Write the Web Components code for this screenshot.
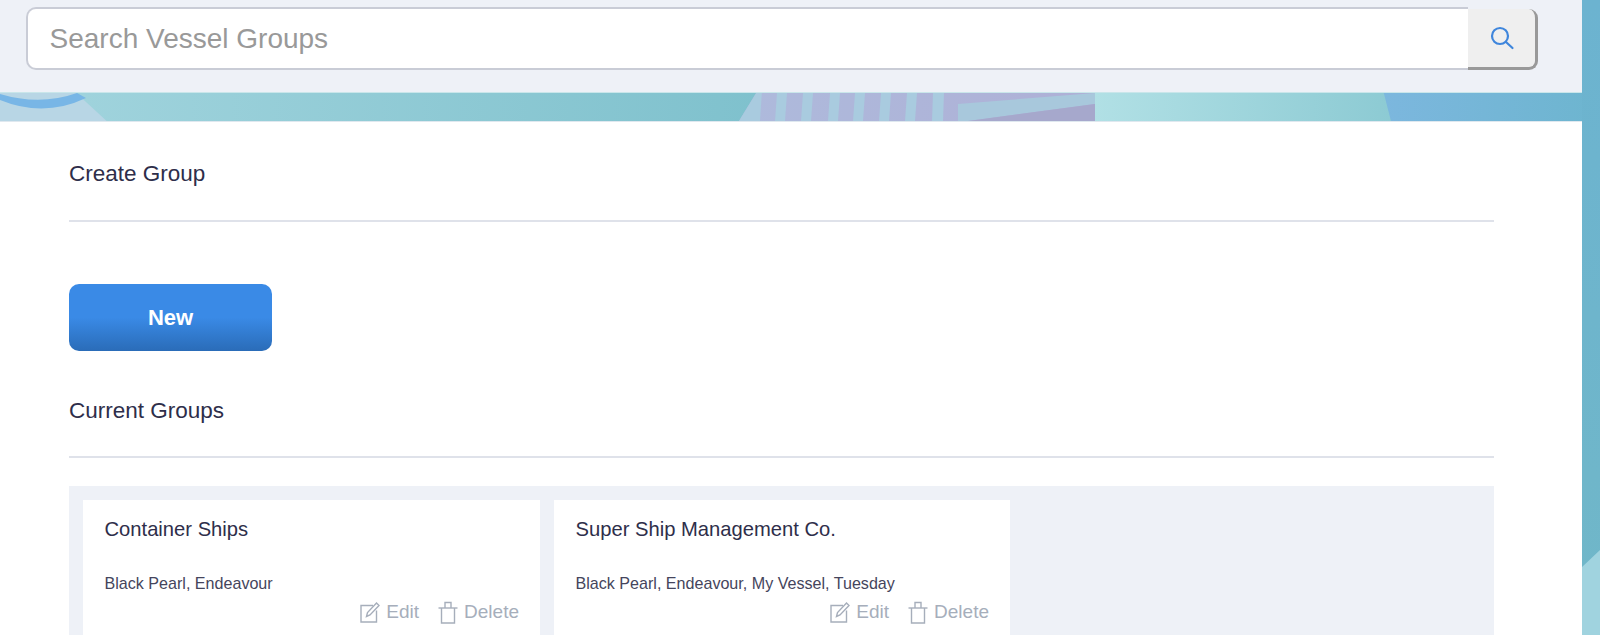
<!DOCTYPE html>
<html>
<head>
<meta charset="utf-8">
<style>
  html, body { margin: 0; padding: 0; }
  body { font-family: "Liberation Sans", Arial, sans-serif; color: #2b2b45; }
</style>
</head>
<body>
<vessel-page>
  <search-box slot="search">Search Vessel Groups</search-box>
  <section-title>Create Group</section-title>
  <new-button>New</new-button>
  <section-title class="current">Current Groups</section-title>
  <group-list>
    <group-card name="Container Ships" vessels="Black Pearl, Endeavour"></group-card>
    <group-card name="Super Ship Management Co." vessels="Black Pearl, Endeavour, My Vessel, Tuesday"></group-card>
  </group-list>
</vessel-page>

<script>
class VesselPage extends HTMLElement {
  constructor() {
    super();
    const shadow = this.attachShadow({ mode: 'open' });
    shadow.innerHTML = `
    <style>
      :host {
        display: block;
        position: relative;
        width: 1600px;
        height: 635px;
        overflow: hidden;
      }
      .backdrop {
        position: absolute;
        left: 0;
        top: 0;
        width: 1600px;
        height: 635px;
      }
      .column {
        position: relative;
        width: 1582px;
        display: flex;
        flex-direction: column;
      }
      .top {
        background: #eef1f7;
        height: 93px;
        box-sizing: border-box;
        padding: 7px 44px 0 26px;
        border-bottom: 1px solid #c9e6ea;
      }
      .main {
        margin-top: 28px;
        background: #fff;
        border-top: 1px solid #dfe8ef;
        height: 514px;
        box-sizing: border-box;
        padding: 0 88px 0 69px;
        display: flex;
        flex-direction: column;
        align-items: stretch;
      }
      ::slotted(*) { flex-shrink: 0; }
    </style>
    <svg class="backdrop" viewBox="0 0 1600 635" aria-hidden="true">
      <defs>
        <linearGradient id="teal" x1="0" x2="1" y1="0" y2="0">
          <stop offset="0" stop-color="#a3d5de"/>
          <stop offset="1" stop-color="#7fc1cd"/>
        </linearGradient>
        <linearGradient id="pale" x1="0" x2="1" y1="0" y2="0">
          <stop offset="0" stop-color="#b1e0e5"/>
          <stop offset="1" stop-color="#8ccad3"/>
        </linearGradient>
        <linearGradient id="blue" x1="0" x2="1" y1="0" y2="0">
          <stop offset="0" stop-color="#7cb7de"/>
          <stop offset="1" stop-color="#6db5cf"/>
        </linearGradient>
        <linearGradient id="strip" x1="0" x2="0" y1="0" y2="1">
          <stop offset="0" stop-color="#6cb3d0"/>
          <stop offset="1" stop-color="#70b7c8"/>
        </linearGradient>
        <linearGradient id="lilac" x1="0" x2="1" y1="0" y2="0">
          <stop offset="0" stop-color="#aebadc"/>
          <stop offset="1" stop-color="#aeb0d6"/>
        </linearGradient>
      </defs>
      <rect x="0" y="90" width="760" height="35" fill="url(#teal)"/>
      <path d="M0 90H73L111 125H0Z" fill="#b8d6e5"/>
      <path d="M0 94Q40 106 77 93L86 98Q44 118 0 100Z" fill="#78b6e6"/>
      <path d="M739 121L758 90H1095V121Z" fill="url(#lilac)"/>
      <path d="M739 121L758 90H762L760 121Z" fill="#a9cbdf"/>
      <path d="M775 121L777 93H787L785 121ZM801 121L803 93H813L811 121ZM828 121L830 93H840L838 121ZM853 121L855 93H865L863 121ZM879 121L881 93H891L889 121ZM905 121L907 93H917L915 121ZM932 121L933 93H944L943 121Z" fill="#a9cbdf"/>
      <path d="M958 121V104L1095 93V104L968 121Z" fill="#a8c8dc"/>
      <path d="M968 121L1095 104V121Z" fill="#a6a8cc"/>
      <rect x="1095" y="90" width="300" height="35" fill="url(#pale)"/>
      <path d="M1383 90H1600V125H1392Z" fill="url(#blue)"/>
      <rect x="1582" y="0" width="18" height="635" fill="url(#strip)"/>
      <path d="M1582 567L1600 550V635H1582Z" fill="#a0d3df"/>
    </svg>
    <div class="column">
      <div class="top"><slot name="search"></slot></div>
      <div class="main"><slot></slot></div>
    </div>
    `;
  }
}

class SearchBox extends HTMLElement {
  constructor() {
    super();
    const shadow = this.attachShadow({ mode: 'open' });
    shadow.innerHTML = `
    <style>
      :host {
        display: flex;
        height: 63px;
        font-family: "Liberation Sans", Arial, sans-serif;
      }
      .field {
        flex: 1;
        box-sizing: border-box;
        background: #fff;
        border: 2px solid #c9ccd6;
        border-right: 0;
        border-radius: 10px 0 0 10px;
        padding-left: 21.5px;
        display: flex;
        align-items: center;
        font-size: 28px;
        color: #999;
      }
      button {
        width: 70px;
        margin-top: 2px;
        box-sizing: border-box;
        padding: 0;
        background: #efefef;
        border: 0 solid #999;
        border-width: 0 3px 3px 0;
        border-radius: 0 9px 9px 0;
        display: flex;
        align-items: center;
        justify-content: center;
      }
      svg { display: block; }
    </style>
    <div class="field"><slot></slot></div>
    <button type="button" aria-label="Search">
      <svg width="26" height="26" viewBox="0 0 26 26" fill="none" stroke="#3f86dc" stroke-width="2.2" stroke-linecap="round">
        <circle cx="11" cy="11" r="8"/>
        <path d="M17 17L23.5 23"/>
      </svg>
    </button>
    `;
  }
}

class SectionTitle extends HTMLElement {
  constructor() {
    super();
    const shadow = this.attachShadow({ mode: 'open' });
    shadow.innerHTML = `
    <style>
      :host {
        display: block;
        box-sizing: border-box;
        height: 100px;
        padding-top: 40px;
        border-bottom: 2px solid #dfe2ea;
        font-size: 22.5px;
        line-height: 24px;
        color: #2e2e4a;
      }
      :host(.current) { height: 107px; padding-top: 48px; }
    </style>
    <slot></slot>
    `;
  }
}

class NewButton extends HTMLElement {
  constructor() {
    super();
    const shadow = this.attachShadow({ mode: 'open' });
    shadow.innerHTML = `
    <style>
      :host {
        display: flex;
        align-items: center;
        justify-content: center;
        align-self: flex-start;
        width: 203px;
        height: 67px;
        margin-top: 62px;
        border-radius: 10px;
        background: linear-gradient(#3a8ae6 0, #3a8ae6 50%, #2a6cb8 100%);
        color: #fff;
        font-size: 22px;
        font-weight: 700;
      }
    </style>
    <slot></slot>
    `;
  }
}

class GroupList extends HTMLElement {
  constructor() {
    super();
    const shadow = this.attachShadow({ mode: 'open' });
    shadow.innerHTML = `
    <style>
      :host {
        display: grid;
        grid-template-columns: 457px 456px;
        column-gap: 14px;
        align-items: start;
        margin-top: 28px;
        padding: 14px;
        height: 160px;
        background: #eef1f7;
      }
    </style>
    <slot></slot>
    `;
  }
}

class GroupCard extends HTMLElement {
  constructor() {
    super();
    const shadow = this.attachShadow({ mode: 'open' });
    shadow.innerHTML = `
    <style>
      :host {
        display: block;
        box-sizing: border-box;
        height: 160px;
        padding: 17px 21px 0 21.5px;
        background: #fff;
      }
      .name {
        font-size: 20.2px;
        line-height: 24px;
        color: #2e2e4a;
      }
      .vessels {
        margin-top: 33px;
        font-size: 16.1px;
        line-height: 18px;
        color: #45455c;
      }
      .actions {
        margin-top: 8px;
        display: flex;
        justify-content: flex-end;
        gap: 19px;
        font-size: 19px;
        line-height: 24px;
        color: #a6aebb;
      }
      .action { display: flex; align-items: center; gap: 6px; }
      svg { display: block; }
    </style>
    <div class="name">${this.getAttribute('name') || ''}</div>
    <div class="vessels">${this.getAttribute('vessels') || ''}</div>
    <div class="actions">
      <span class="action">
        <svg width="20" height="22" viewBox="0 0 20 22" fill="none" stroke="#a6aebb" stroke-width="1.4">
          <path d="M13 4.5H1V21H16.5V9.5"/>
          <path d="M6.5 15.5L7.5 11.5L16.5 2L19 4.5L10 14Z"/>
        </svg>
        Edit
      </span>
      <span class="action">
        <svg width="20" height="23" viewBox="0 0 20 23" fill="none" stroke="#a6aebb" stroke-width="1.4">
          <path d="M0.5 7H19.5"/>
          <path d="M7 7V1.5H13V7"/>
          <path d="M3.5 7V22H16.5V7"/>
        </svg>
        Delete
      </span>
    </div>
    `;
  }
}

customElements.define('vessel-page', VesselPage);
customElements.define('search-box', SearchBox);
customElements.define('section-title', SectionTitle);
customElements.define('new-button', NewButton);
customElements.define('group-list', GroupList);
customElements.define('group-card', GroupCard);
</script>
</body>
</html>
